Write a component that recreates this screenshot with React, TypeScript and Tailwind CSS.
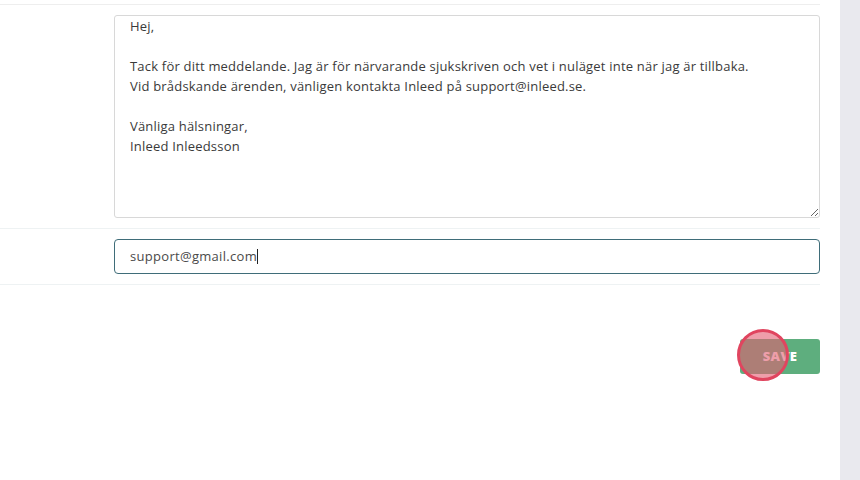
import React from "react";

const message = `Hej,

Tack för ditt meddelande. Jag är för närvarande sjukskriven och vet i nuläget inte när jag är tillbaka.
Vid brådskande ärenden, vänligen kontakta Inleed på support@inleed.se.

Vänliga hälsningar,
Inleed Inleedsson`;

export default function App() {
  return (
    <div className="flex w-[860px] h-[480px] bg-white font-['Open_Sans',sans-serif] overflow-hidden">
      <div className="w-[840px] h-full bg-white">
        <div className="w-[820px]">
          <div className="h-[5px] border-b border-[#eeeeee]" />

          {/* Auto reply message */}
          <div className="pl-[114px] pt-[10px] pb-[10px] border-b border-[#eef2f3]">
            <textarea
              defaultValue={message}
              readOnly
              className="block w-full h-[203px] rounded-[3px] border border-[#d8d8d8] pl-[15px] pr-3 pt-0 text-[13px] leading-[20px] tracking-[0.2px] text-[#3a3a3a] outline-none"
            />
          </div>

          {/* Forward address */}
          <div className="pl-[114px] pt-[10px] pb-[10px] border-b border-[#eef2f3]">
            <div className="flex items-center h-[35px] rounded-[4px] border border-[#3f6d79] pl-[15px] text-[13px] tracking-[0.3px] text-[#4a4a4a]">
              <span>support@gmail.com</span>
              <span className="inline-block w-px h-[15px] bg-[#222]" />
            </div>
          </div>

          <div className="flex justify-end pt-[54px]">
            <div className="relative">
              <button className="w-[80px] h-[35px] rounded-[3px] bg-[#5eae7e] text-white text-[13px] font-extrabold tracking-wide">
                SAVE
              </button>
              <div className="absolute left-[-3px] top-[-10px] w-[52px] h-[52px] rounded-full border-[3px] border-[#e0455f] bg-[#e25d72]/60" />
            </div>
          </div>
        </div>
      </div>
      <div className="w-[20px] h-full bg-[#e9e9ee]" />
    </div>
  );
}
